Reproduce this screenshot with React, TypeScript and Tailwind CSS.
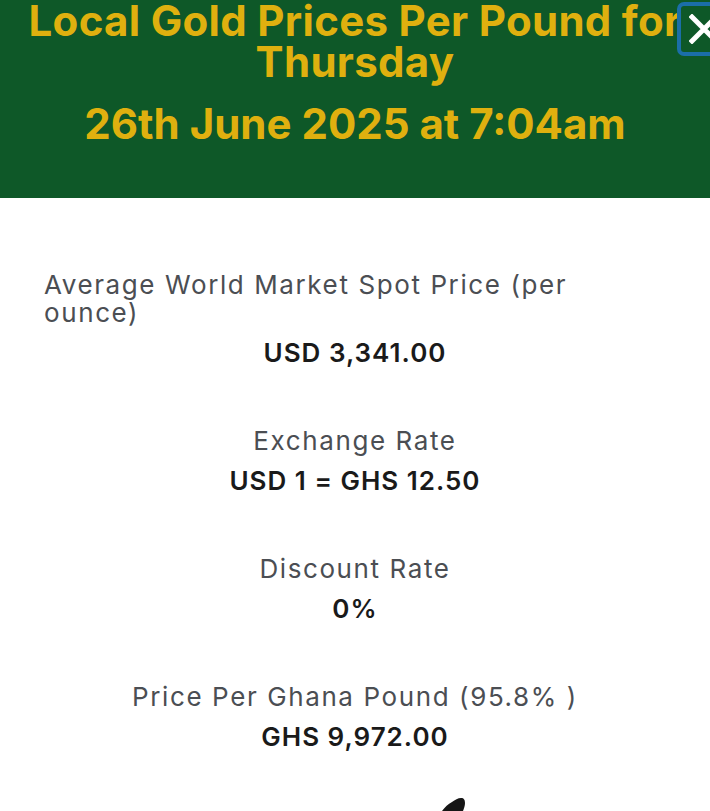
const rows = [
  { label: 'Exchange Rate', value: 'USD 1 = GHS 12.50' },
  { label: 'Discount Rate', value: '0%' },
  { label: 'Price Per Ghana Pound (95.8% )', value: 'GHS 9,972.00' },
]

export default function App() {
  return (
    <main className="bg-white font-['Inter',sans-serif] overflow-hidden">
      {/* Header */}
      <header className="relative overflow-hidden bg-[#0e5828] px-5 pb-[54px] text-center text-[#dfb00f]">
        <h1 className="text-[42px] font-bold leading-[41px] tracking-[0.3px]">
          Local Gold Prices Per Pound for Thursday
        </h1>
        <p className="mt-[21px] text-[42px] font-bold leading-[41px]">
          26th June 2025 at 7:04am
        </p>

        <button className="absolute right-[-21px] top-[2px] flex h-[54px] w-[54px] items-center justify-center rounded-[7px] border-[4px] border-[#1b6ea8]">
          <svg width="30" height="30" viewBox="0 0 30 30">
            <path
              d="M3 3 L27 27 M27 3 L3 27"
              stroke="#fff"
              strokeWidth="5"
              strokeLinecap="square"
            />
          </svg>
        </button>
      </header>

      {/* Prices */}
      <section className="flex flex-col gap-12 pt-[73px]">
        <div>
          <p className="max-w-[650px] px-[44px] text-left text-[26px] leading-[28px] tracking-[1.6px] text-[#4b4e53]">
            Average World Market Spot Price (per ounce)
          </p>
          <p className="text-center text-[26px] font-semibold leading-[52px] tracking-[1px] text-[#1a1a1a]">
            USD 3,341.00
          </p>
        </div>

        {rows.map((row) => (
          <div key={row.label} className="text-center">
            <p className="text-[26px] leading-[28px] tracking-[1.6px] text-[#4b4e53]">
              {row.label}
            </p>
            <p className="text-[26px] font-semibold leading-[52px] tracking-[1px] text-[#1a1a1a]">
              {row.value}
            </p>
          </div>
        ))}
      </section>

      <div className="mt-[27px] h-[21px]">
        <svg width="710" height="21" viewBox="0 0 710 21">
          <path
            d="M442 21 C445 17 448 14 452 12 C455 10 458 8 461 8 C464 8 465 10 465 13 C465 16 464 18 463 21 Z"
            fill="#161616"
          />
        </svg>
      </div>
    </main>
  )
}
